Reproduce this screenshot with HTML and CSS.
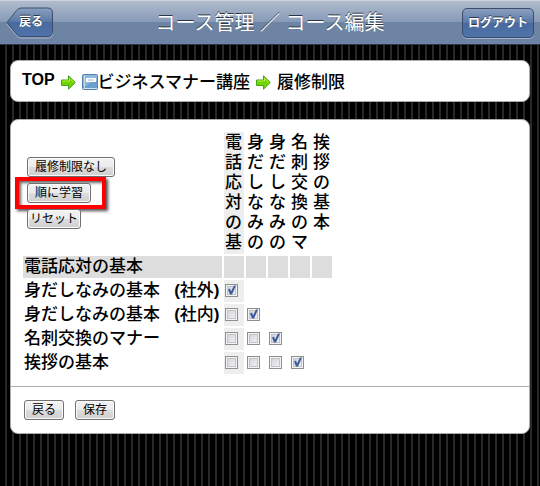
FILE: index.html
```html
<!DOCTYPE html>
<html lang="ja">
<head>
  <meta charset="UTF-8">
  <meta name="viewport" content="width=device-width, initial-scale=1">
  <title>コース管理 ／ コース編集</title>
  <link rel="stylesheet" href="styles.css">
</head>
<body>

  <header class="toolbar">
    <a class="back" href="#">
      <svg class="back-shape" width="48" height="32" viewBox="0 0 48 32" aria-hidden="true">
        <defs>
          <linearGradient id="backFill" x1="0" y1="0" x2="0" y2="1">
            <stop offset="0" stop-color="#8a9fc0"/>
            <stop offset="0.5" stop-color="#5877a6"/>
            <stop offset="0.5" stop-color="#48699d"/>
            <stop offset="1" stop-color="#4f74ab"/>
          </linearGradient>
        </defs>
        <path d="M1 16.5 L10.5 4 Q12.500 1.500 15 1.500 H41.500 Q46.500 1.500 46.500 6.500 V25 Q46.500 30 41.500 30 H15 Q12.500 30 10.500 27.500 Z" fill="none" stroke="#a4b4cc" transform="translate(0 1)"/>
        <path d="M1 15.500 L10.500 3.500 Q12.500 1 15 1 H41.500 Q46.500 1 46.500 6 V24 Q46.500 29.500 41.500 29.500 H15 Q12.500 29.500 10.500 27 Z" fill="url(#backFill)" stroke="#3d4d69"/>
      </svg>
      <span class="back-label">戻る</span>
    </a>
    <h1>コース管理 ／ コース編集</h1>
    <a class="logout" href="#">ログアウト</a>
  </header>

  <nav class="card breadcrumb">
    <a class="top" href="#">TOP</a>
    <svg class="arrow" width="15" height="15" viewBox="0 0 15 15" aria-hidden="true">
      <path d="M.5 5 H7.500 V.8 L14.300 7.500 L7.500 14.200 V10.500 H.5 Z" fill="#6fd400" stroke="#45a31c"/>
      <path d="M1.500 6 H8.500 V3.200 L12.800 7.500" fill="none" stroke="#b5f23c"/>
    </svg>
    <a class="course" href="#"><svg width="16" height="16" viewBox="0 0 16 16" aria-hidden="true">
      <rect x=".5" y=".5" width="15" height="15" rx="1" fill="#6c9fca" stroke="#5084b0"/>
      <path d="M1 1 H15 V7 Q8 7 4 12 H1 Z" fill="#90b9da"/>
      <path d="M2.500 1 V15" stroke="#c2dbed"/>
      <path d="M1 14.500 H15" stroke="#d5e3ef"/>
      <rect x="4" y="4" width="10" height="4" fill="#fff"/>
      <path d="M6 6 H12" stroke="#9db9d0"/>
    </svg>ビジネスマナー講座</a>
    <svg class="arrow" width="15" height="15" viewBox="0 0 15 15" aria-hidden="true">
      <path d="M.5 5 H7.500 V.8 L14.300 7.500 L7.500 14.200 V10.500 H.5 Z" fill="#6fd400" stroke="#45a31c"/>
      <path d="M1.500 6 H8.500 V3.200 L12.800 7.500" fill="none" stroke="#b5f23c"/>
    </svg>
    <span>履修制限</span>
  </nav>

  <form class="card">
    <div class="card-body">
      <table class="limits">
        <thead>
          <tr>
            <td class="name">
              <div class="presets">
                <button type="button">履修制限なし</button>
                <span class="marked"><button type="button">順に学習</button></span>
                <button class="reset" type="reset">リセット</button>
              </div>
            </td>
            <th class="first" scope="col">電話応対の基</th>
            <th scope="col">身だしなみの</th>
            <th scope="col">身だしなみの</th>
            <th scope="col">名刺交換のマ</th>
            <th scope="col">挨拶の基本</th>
          </tr>
        </thead>
        <tbody>
          <tr class="head-row">
            <th scope="row">電話応対の基本</th>
            <td></td>
            <td></td>
            <td></td>
            <td></td>
            <td></td>
          </tr>
          <tr>
            <th scope="row">身だしなみの基本&nbsp;&nbsp;&nbsp;<b>(</b>社外<b>)</b></th>
            <td class="first"><input type="checkbox" aria-label="身だしなみの基本 (社外)：電話応対の基本" checked></td>
            <td></td>
            <td></td>
            <td></td>
            <td></td>
          </tr>
          <tr>
            <th scope="row">身だしなみの基本&nbsp;&nbsp;&nbsp;<b>(</b>社内<b>)</b></th>
            <td class="first"><input type="checkbox" aria-label="身だしなみの基本 (社内)：電話応対の基本"></td>
            <td><input type="checkbox" aria-label="身だしなみの基本 (社内)：身だしなみの基本 (社外)" checked></td>
            <td></td>
            <td></td>
            <td></td>
          </tr>
          <tr>
            <th scope="row">名刺交換のマナー</th>
            <td class="first"><input type="checkbox" aria-label="名刺交換のマナー：電話応対の基本"></td>
            <td><input type="checkbox" aria-label="名刺交換のマナー：身だしなみの基本 (社外)"></td>
            <td><input type="checkbox" aria-label="名刺交換のマナー：身だしなみの基本 (社内)" checked></td>
            <td></td>
            <td></td>
          </tr>
          <tr>
            <th scope="row">挨拶の基本</th>
            <td class="first"><input type="checkbox" aria-label="挨拶の基本：電話応対の基本"></td>
            <td><input type="checkbox" aria-label="挨拶の基本：身だしなみの基本 (社外)"></td>
            <td><input type="checkbox" aria-label="挨拶の基本：身だしなみの基本 (社内)"></td>
            <td><input type="checkbox" aria-label="挨拶の基本：名刺交換のマナー" checked></td>
            <td></td>
          </tr>
        </tbody>
      </table>
    </div>
    <div class="card-footer">
      <button type="button">戻る</button>
      <button type="submit">保存</button>
    </div>
  </form>

</body>
</html>
```

FILE: styles.css
```css
* {
  box-sizing: border-box;
}

body {
  margin: 0;
  color: #000;
  font-family: "Liberation Sans", "Noto Sans CJK JP", sans-serif;
  background: repeating-linear-gradient(to right, #000 0, #000 5px, #282828 5px, #282828 7px);
}

a {
  color: inherit;
  text-decoration: none;
}

/* top bar */
.toolbar {
  display: grid;
  grid-template-columns: 1fr auto 1fr;
  align-items: center;
  height: 45px;
  padding: 0 6px;
  color: #fff;
  border-top: 1px solid #cdd5df;
  border-bottom: 1px solid #2d3642;
  background: linear-gradient(#b0bccd 0, #8699b7 49%, #6d84a2 50%, #6d84a6 100%);
}

.toolbar h1 {
  margin: 0;
  font-size: 20px;
  font-weight: 400;
  line-height: 24px;
  text-shadow: 0 -1px 0 #2d3642;
}

.back {
  display: grid;
  justify-self: start;
  font-size: 12px;
  font-weight: 700;
  text-shadow: 0 -1px 0 #2d3642;
}

.back-shape,
.back-label {
  grid-area: 1 / 1;
}

.back-label {
  z-index: 1;
  padding-left: 13px;
  line-height: 30px;
}

.logout {
  justify-self: end;
  height: 30px;
  padding: 0 5px;
  font-size: 12px;
  font-weight: 700;
  line-height: 28px;
  text-shadow: 0 -1px 0 #2d3642;
  border: 1px solid #3d4d69;
  border-radius: 5px;
  background: linear-gradient(#8a9fc0 0, #5877a6 50%, #48699d 50%, #4f74ab 100%);
  box-shadow: 0 1px 0 #a4b4cc;
}

/* white panels */
.card {
  margin: 15px 10px 17px;
  border: 1px solid #aaa;
  border-radius: 8px;
  background: #fff;
}

.breadcrumb {
  display: flex;
  align-items: center;
  gap: 6px;
  height: 42px;
  padding: 0 11px 2px;
  font-size: 17px;
  font-weight: 500;
}

.breadcrumb .top {
  font-size: 16px;
  font-weight: 700;
}

.arrow {
  margin-top: 4px;
}

.course {
  display: flex;
  align-items: center;
}

.course svg {
  margin-top: 4px;
}

.card-body {
  padding: 10px;
}

.card-footer {
  display: flex;
  gap: 11px;
  padding: 13px;
  border-top: 1px solid #aaa;
}

/* course table */
.limits {
  width: 311px;
  border-spacing: 2px;
  table-layout: fixed;
}

.limits th,
.limits td {
  width: 20px;
  height: 22px;
  padding: 1px;
  font-size: 17px;
  font-weight: 500;
  line-height: 20px;
  text-align: left;
}

.limits thead th {
  height: 122px;
  vertical-align: top;
  word-break: break-all;
}

.limits .name {
  width: 199px;
}

.limits tbody th {
  white-space: nowrap;
}

.limits b {
  font-weight: 700;
}

.limits .first {
  background: #eee;
}

.limits .head-row th,
.limits .head-row td {
  background: #ddd;
}

.presets {
  display: flex;
  flex-direction: column;
  align-items: flex-start;
  gap: 6px;
  padding: 0 3px;
}

.marked {
  display: flex;
  margin: -6px -12px;
  padding: 2px 11px 2px 8px;
  border: 4px solid #f00;
  box-shadow: 2px 2px 3px rgba(0, 0, 0, 0.7), inset 2px 2px 3px rgba(0, 0, 0, 0.6);
}

button {
  height: 20px;
  padding: 0 7px;
  color: #000;
  font-family: inherit;
  font-size: 12px;
  line-height: 16px;
  border: 1px solid #707070;
  border-radius: 3px;
  background: linear-gradient(#f2f2f2 0, #ebebeb 50%, #ddd 50%, #cfcfcf 100%);
  box-shadow: inset 0 0 0 1px #fafafa;
}

.reset {
  padding: 0 2px;
}

input[type="checkbox"] {
  display: block;
  appearance: none;
  width: 13px;
  height: 13px;
  margin: 0 0 2px;
  border: 1px solid #8e8f8f;
  background: linear-gradient(135deg, #cbcfd5 0, #f6f6f6 100%);
  box-shadow: inset 0 0 0 1px #f4f4f4, inset 0 0 0 2px #c0c5cb;
}

input[type="checkbox"]:checked::before {
  content: "";
  display: block;
  width: 11px;
  height: 11px;
  background: #3f58a0;
  clip-path: polygon(2px 5px, 4px 4px, 5px 7px, 8px 1px, 10px 1px, 6px 10px, 4px 10px);
}
```
